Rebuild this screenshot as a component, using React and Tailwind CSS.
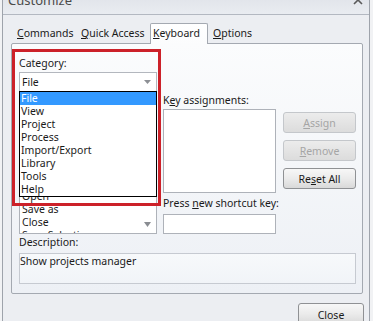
import React from "react";

const categories = ["File", "View", "Project", "Process", "Import/Export", "Library", "Tools", "Help"];
// only the rows that show below the open dropdown
const commands = ["Open", "Save as", "Close", "Save Selection"];

const Btn = ({ children, disabled, className = "" }) => (
  <div
    className={`flex items-center justify-center rounded-[3px] border ${
      disabled
        ? "border-[#c4c7cb] bg-gradient-to-b from-[#ececec] to-[#dcdcdc] text-[#a5a5a5]"
        : "border-[#8f9194] bg-gradient-to-b from-[#f7f7f7] via-[#ebebeb] to-[#d9d9d9] text-[#1a1a1a]"
    } ${className}`}
  >
    {children}
  </div>
);

const Tab = ({ children, active, className = "" }) => (
  <div
    className={`h-[21px] border border-b-0 pt-[2px] ${
      active
        ? "z-10 rounded-t-[2px] border-[#a4a9b1] bg-gradient-to-b from-[#ffffff] to-[#fbfcfd]"
        : "border-transparent"
    } ${className}`}
  >
    {children}
  </div>
);

export default function App() {
  return (
    <div className="relative h-[321px] w-[373px] overflow-hidden bg-[#f1f2f4] font-['Noto_Sans',sans-serif] text-[10.5px] leading-[14px] text-[#1a1a1a]">
      <div className="ml-[2px] h-[340px] w-[368px] border-x border-[#9ea3ab] bg-[#eceef2]">
        {/* title bar */}
        <div className="flex h-[15px] items-start justify-between border-b border-[#b3b8c1] bg-gradient-to-b from-[#e2e5eb] to-[#e9ecf1]">
          <span className="-mt-[8px] ml-[5px] text-[13px] leading-[16px] text-[#4a4a4a]">Customize</span>
          <svg className="-mt-[5px] mr-[6px]" width="10" height="10" viewBox="0 0 10 10">
            <path d="M1 1 L9 9 M9 1 L1 9" stroke="#5a5a5a" strokeWidth="1.6" fill="none" />
          </svg>
        </div>

        {/* tabs */}
        <div className="flex h-[28px] items-end pl-[9px]">
          <Tab className="-mb-px w-[64px] pl-[4px]"><u>C</u>ommands</Tab>
          <Tab className="-mb-px w-[74px] pl-[4px]"><u>Q</u>uick Access</Tab>
          <Tab active className="-mb-px w-[58px] pl-[2px]"><u>K</u>eyboard</Tab>
          <Tab className="-mb-px pl-[4px] pr-[4px]"><u>O</u>ptions</Tab>
        </div>

        {/* tab panel */}
        <div className="ml-[8px] w-[352px] rounded-[2px] border border-[#a4a9b1] bg-gradient-to-b from-[#fbfcfd] to-[#edf0f5] pb-[9px] pl-[7px] pr-[6px] pt-[12px]">
          <div className="w-[138px]">
            <div className="h-[14px]">Category:</div>
            <div className="relative mt-[2px] flex h-[20px] items-center border border-[#b3b7be] bg-white">
              <span className="flex-1 pl-[2px]">File</span>
              <div className="flex w-[17px] justify-center">
                <svg width="7" height="4" viewBox="0 0 7 4">
                  <path d="M0 0 H7 L3.5 4 Z" fill="#8d9095" />
                </svg>
              </div>
              {/* open dropdown */}
              <div className="absolute left-[-1px] top-full z-20 w-[138px] border border-black bg-white">
                {categories.map((c, i) => (
                  <div
                    key={c}
                    className={`h-[13px] pl-[1px] leading-[13px] ${i === 0 ? "bg-[#3399ff] text-white" : ""}`}
                  >
                    {c}
                  </div>
                ))}
              </div>
            </div>
          </div>

          <div className="mt-[1px] flex gap-[6px]">
            <div className="w-[138px]">
              <div className="h-[14px]" />
              <div className="mt-[2px] flex h-[125px] overflow-hidden border border-[#aeb2b9] bg-white">
                <div className="flex-1 pl-[2px] pt-[80px]">
                  {commands.map((c) => (
                    <div key={c} className="h-[13px] leading-[13px]">{c}</div>
                  ))}
                </div>
                <div className="flex w-[17px] flex-col justify-end">
                  <div className="flex h-[17px] items-center justify-center">
                    <svg width="7" height="5" viewBox="0 0 7 5">
                      <path d="M0 0 H7 L3.5 5 Z" fill="#8a8d92" />
                    </svg>
                  </div>
                </div>
              </div>
            </div>

            <div className="flex w-[193px] flex-col">
              <div className="h-[14px]">K<u>e</u>y assignments:</div>
              <div className="mt-[2px] flex gap-[7px]">
                <div className="h-[84px] w-[113px] border border-[#aeb2b9] bg-white" />
                <div className="flex w-[73px] flex-col gap-[7px] pt-[3px]">
                  <Btn disabled className="h-[21px]"><span><u>A</u>ssign</span></Btn>
                  <Btn disabled className="h-[21px]"><span><u>R</u>emove</span></Btn>
                  <Btn className="h-[21px]"><span>Re<u>s</u>et All</span></Btn>
                </div>
              </div>
              <div className="mt-[3px] h-[14px]">Press <u>n</u>ew shortcut key:</div>
              <div className="mt-[4px] h-[20px] w-[113px] border border-[#aeb2b9] bg-white" />
            </div>
          </div>

          <div className="mt-[1px] h-[14px]">Description:</div>
          <div className="mt-[4px] h-[31px] border border-[#c6cad1] bg-gradient-to-b from-[#f7f9fb] to-[#f1f4f8]">
            Show projects manager
          </div>
        </div>

        {/* footer */}
        <div className="mr-[5px] mt-[9px] flex justify-end">
          <Btn className="h-[22px] w-[66px]"><span className="mt-[2px]">Close</span></Btn>
        </div>
      </div>

      {/* red annotation frame */}
      <div className="pointer-events-none absolute left-[12px] top-[49px] z-30 h-[157px] w-[149px] border-[3px] border-[#cc2129]" />
    </div>
  );
}
